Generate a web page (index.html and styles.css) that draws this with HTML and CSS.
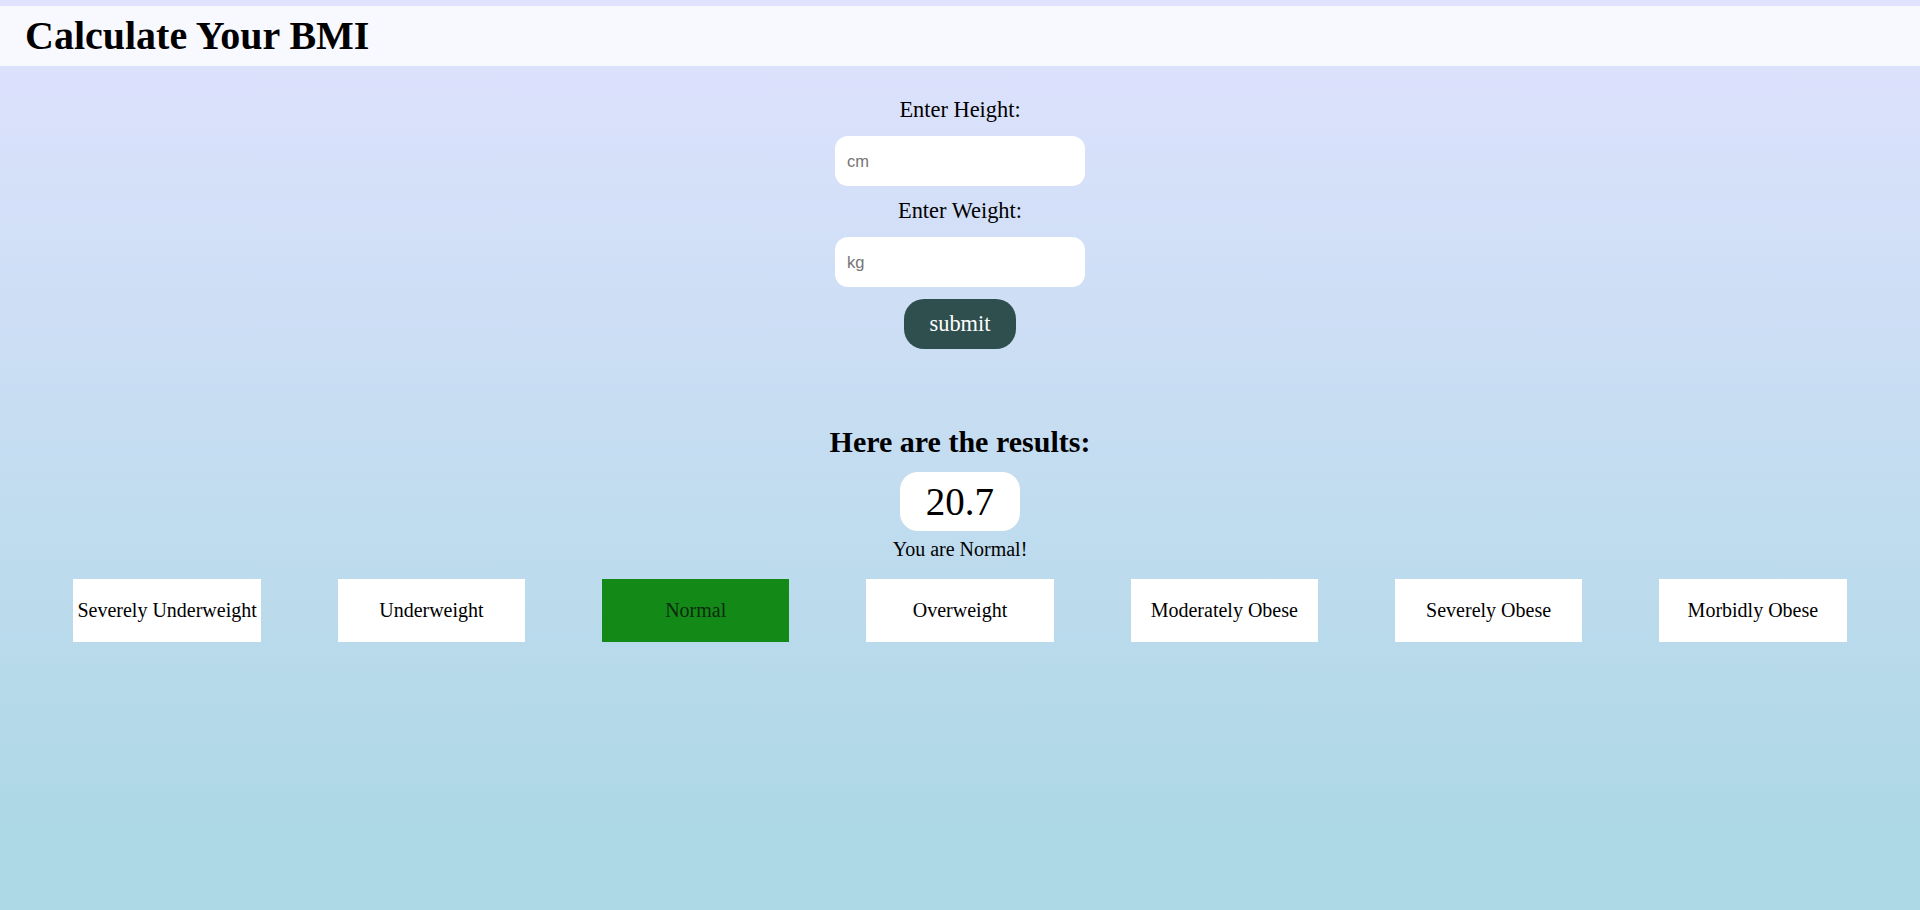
FILE: index.html
```html
<!DOCTYPE html>
<html lang="en">
<head>
<meta charset="utf-8">
<title>BMI Calculator</title>
<link rel="stylesheet" href="styles.css">
</head>
<body>
<header class="topbar">
  <h1 class="title">Calculate Your BMI</h1>
</header>
<main class="calc">
  <form class="form">
    <label class="label" for="height">Enter Height:</label>
    <input class="field" id="height" type="text" placeholder="cm">
    <label class="label" for="weight">Enter Weight:</label>
    <input class="field" id="weight" type="text" placeholder="kg">
    <button class="submit" type="button">submit</button>
  </form>
  <section class="results">
    <h2 class="results-title">Here are the results:</h2>
    <div class="score">20.7</div>
    <p class="verdict">You are Normal!</p>
  </section>
  <div class="scale">
    <div class="cat">Severely Underweight</div>
    <div class="cat">Underweight</div>
    <div class="cat cat-active">Normal</div>
    <div class="cat">Overweight</div>
    <div class="cat">Moderately Obese</div>
    <div class="cat">Severely Obese</div>
    <div class="cat">Morbidly Obese</div>
  </div>
</main>
</body>
</html>
```

FILE: styles.css
```css
html, body {
  margin: 0;
  padding: 0;
}
body {
  min-height: 100vh;
  background: linear-gradient(to bottom, #e0e2fe 0%, #add8e6 92%, #add8e6 100%);
  font-family: "Liberation Serif", "Times New Roman", serif;
  color: #000;
  padding-top: 6px;
  box-sizing: border-box;
}
.topbar {
  background: ghostwhite;
  height: 60px;
  box-sizing: border-box;
  padding: 8px 0 8px 25px;
}
.title {
  margin: 0;
  font-size: 40px;
  line-height: 44px;
  font-weight: bold;
}
.calc {
  display: flex;
  flex-direction: column;
  align-items: center;
}
.form {
  display: flex;
  flex-direction: column;
  align-items: center;
  margin-top: 31px;
}
.label {
  font-size: 22.4px;
  line-height: 25px;
  margin-bottom: 14px;
}
.field {
  width: 250px;
  height: 50px;
  box-sizing: border-box;
  border: none;
  border-radius: 13px;
  padding: 0 12px;
  font-family: "Liberation Sans", Arial, sans-serif;
  font-size: 16.5px;
  background: #fff;
  margin-bottom: 12px;
  outline: none;
}
.field::placeholder {
  color: #757575;
}
.submit {
  width: 112px;
  height: 50px;
  border: none;
  border-radius: 20px;
  background: darkslategray;
  color: #fff;
  font-family: "Liberation Serif", "Times New Roman", serif;
  font-size: 22.4px;
  padding: 0;
}
.results {
  display: flex;
  flex-direction: column;
  align-items: center;
  margin-top: 76px;
}
.results-title {
  margin: 0;
  font-size: 30px;
  line-height: 34px;
  font-weight: bold;
}
.score {
  margin-top: 13px;
  width: 120px;
  height: 59px;
  box-sizing: border-box;
  background: #fff;
  border-radius: 18px;
  font-size: 39px;
  line-height: 59px;
  text-align: center;
}
.verdict {
  margin: 7px 0 0;
  font-size: 20px;
  line-height: 22px;
}
.scale {
  align-self: stretch;
  display: grid;
  grid-template-columns: repeat(7, 187.3px);
  column-gap: 77px;
  justify-content: center;
  margin-top: 19px;
}
.cat {
  height: 63px;
  background: #fff;
  display: flex;
  align-items: center;
  justify-content: center;
  font-size: 20px;
  white-space: nowrap;
}
.cat-active {
  background: #138a18;
  color: #0d2a0e;
}
```
